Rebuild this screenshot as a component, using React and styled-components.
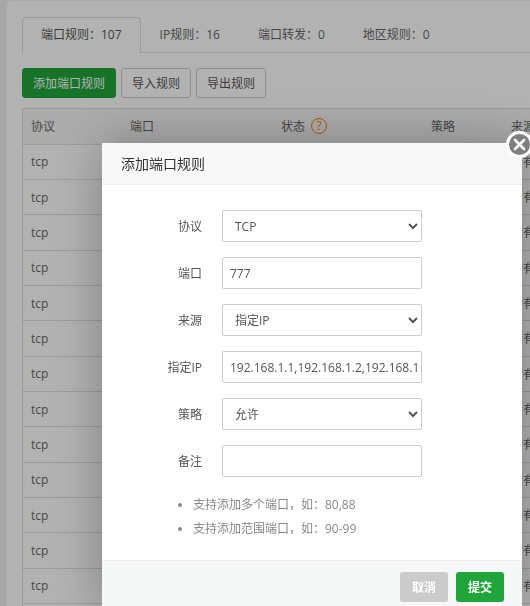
import React from "react";
import styled, { createGlobalStyle } from "styled-components";

const Global = createGlobalStyle`
  html, body {
    margin: 0;
    height: 100%;
    overflow: hidden;
    background: #f0f0f0;
    font-family: "Open Sans", "Noto Sans CJK SC", sans-serif;
    font-size: 12px;
    color: #666;
  }
`;

const Card = styled.div`
  margin: 1px 0 0 7px;
  padding: 16px 0 0 15px;
  background: #fff;
  border-radius: 5px 0 0 0;
  min-height: 605px;
  box-sizing: border-box;
`;

const Tabs = styled.div`
  display: flex;
  height: 36px;
  border-bottom: 1px solid #ddd;
  box-sizing: border-box;
`;

const Tab = styled.div`
  height: ${(p) => (p.$active ? "36px" : "35px")};
  line-height: 34px;
  padding: 0 18px;
  box-sizing: border-box;
  color: ${(p) => (p.$active ? "#555" : "#666")};
  background: #fff;
  border: 1px solid ${(p) => (p.$active ? "#ddd" : "transparent")};
  border-bottom: 0;
  border-radius: 4px 4px 0 0;
`;

const Toolbar = styled.div`
  display: flex;
  gap: 5px;
  margin: 15px 0 10px;
`;

const Button = styled.button`
  height: 30px;
  padding: 0 10px;
  font: inherit;
  color: ${(p) => (p.$primary ? "#fff" : "#555")};
  background: ${(p) => (p.$primary ? "#20a53a" : "#fff")};
  border: 1px solid ${(p) => (p.$primary ? "#20a53a" : "#ccc")};
  border-radius: 3px;
`;

const Table = styled.div`
  width: 560px;
  border-top: 1px solid #ddd;
  border-left: 1px solid #ddd;
`;

const Row = styled.div`
  display: grid;
  grid-template-columns: 99px 151px 150px 80px 1fr;
  height: ${(p) => (p.$head ? "35.6px" : "35.33px")};
  align-items: center;
  box-sizing: border-box;
  border-bottom: 1px solid #ddd;
  background: ${(p) => (p.$head ? "#f6f6f6" : "#fff")};
`;

const Cell = styled.div`
  padding-left: 8px;
  display: flex;
  align-items: center;
  gap: 6px;
`;

const Ask = styled.span`
  width: 16px;
  height: 16px;
  box-sizing: border-box;
  border: 1px solid #fb7d00;
  border-radius: 50%;
  color: #fb7d00;
  font-size: 12px;
  line-height: 14px;
  text-align: center;
`;

const Overlay = styled.div`
  position: fixed;
  inset: 0;
  background: rgba(0, 0, 0, 0.3);
`;

const Modal = styled.div`
  position: absolute;
  left: 102px;
  top: 143px;
  width: 420px;
  background: #fff;
  box-shadow: 1px 1px 50px rgba(0, 0, 0, 0.3);
`;

const Close = styled.div`
  position: absolute;
  right: -11px;
  top: -12px;
  width: 27px;
  height: 27px;
  box-sizing: border-box;
  border: 3px solid #fff;
  border-radius: 50%;
  background: #7f7f7f;
  display: flex;
  align-items: center;
  justify-content: center;
`;

const Title = styled.div`
  height: 42px;
  line-height: 41px;
  padding-left: 19px;
  box-sizing: border-box;
  font-size: 14px;
  color: #333;
  background: #f8f8f8;
  border-bottom: 1px solid #eee;
`;

const Form = styled.div`
  display: flex;
  flex-direction: column;
  gap: 15px;
  padding: 25px 0 0;
`;

const Line = styled.div`
  display: grid;
  grid-template-columns: 100px 200px;
  column-gap: 20px;
  align-items: center;
`;

const Label = styled.label`
  text-align: right;
  color: #555;
`;

const Input = styled.input`
  height: 32px;
  width: 200px;
  box-sizing: border-box;
  padding: 0 2px 0 7px;
  font: inherit;
  color: #555;
  background: #fff;
  border: 1px solid #ccc;
  border-radius: 2px;
  outline: none;
`;

const Select = styled.select`
  height: 32px;
  width: 200px;
  box-sizing: border-box;
  padding: 0 0 0 8px;
  font: inherit;
  color: #555;
  background: #fff;
  border: 1px solid #ccc;
  border-radius: 2px;
  outline: none;
`;

const Hints = styled.ul`
  margin: 0;
  padding: 16px 0 0 91px;
  height: 83px;
  box-sizing: border-box;
  color: #888;
  line-height: 24px;
`;

const Footer = styled.div`
  display: flex;
  justify-content: flex-end;
  gap: 8px;
  padding: 11px 18px 10px;
  background: #f6f8f8;
  border-top: 1px solid #eee;
`;

const FootButton = styled.button`
  width: 48px;
  height: 30px;
  padding: 0;
  font: inherit;
  font-weight: 600;
  color: #fff;
  background: ${(p) => (p.$primary ? "#20a53a" : "#cbcbcb")};
  border: 0;
  border-radius: 3px;
`;

const rows = Array.from({ length: 14 }, (_, i) => i);

export default function App() {
  return (
    <>
      <Global />
      <Card>
        <Tabs>
          <Tab $active>端口规则：107</Tab>
          <Tab>IP规则：16</Tab>
          <Tab>端口转发：0</Tab>
          <Tab>地区规则：0</Tab>
        </Tabs>
        <Toolbar>
          <Button $primary>添加端口规则</Button>
          <Button>导入规则</Button>
          <Button>导出规则</Button>
        </Toolbar>
        <Table>
          <Row $head>
            <Cell>协议</Cell>
            <Cell>端口</Cell>
            <Cell>状态<Ask>?</Ask></Cell>
            <Cell>策略</Cell>
            <Cell>来源</Cell>
          </Row>
          {rows.map((i) => (
            <Row key={i}>
              <Cell>tcp</Cell>
              <Cell />
              <Cell />
              <Cell />
              <Cell>所有</Cell>
            </Row>
          ))}
        </Table>
      </Card>
      <Overlay>
        <Modal>
          <Close>
            <svg width="13" height="13" viewBox="0 0 13 13">
              <path d="M2 2l9 9M11 2l-9 9" stroke="#fff" strokeWidth="2.6" strokeLinecap="round" />
            </svg>
          </Close>
          <Title>添加端口规则</Title>
          <Form>
            <Line>
              <Label>协议</Label>
              <Select defaultValue="tcp"><option value="tcp">TCP</option></Select>
            </Line>
            <Line>
              <Label>端口</Label>
              <Input defaultValue="777" />
            </Line>
            <Line>
              <Label>来源</Label>
              <Select defaultValue="ip"><option value="ip">指定IP</option></Select>
            </Line>
            <Line>
              <Label>指定IP</Label>
              <Input defaultValue="192.168.1.1,192.168.1.2,192.168.1.3" />
            </Line>
            <Line>
              <Label>策略</Label>
              <Select defaultValue="allow"><option value="allow">允许</option></Select>
            </Line>
            <Line>
              <Label>备注</Label>
              <Input />
            </Line>
          </Form>
          <Hints>
            <li>支持添加多个端口，如：80,88</li>
            <li>支持添加范围端口，如：90-99</li>
          </Hints>
          <Footer>
            <FootButton>取消</FootButton>
            <FootButton $primary>提交</FootButton>
          </Footer>
        </Modal>
      </Overlay>
    </>
  );
}
